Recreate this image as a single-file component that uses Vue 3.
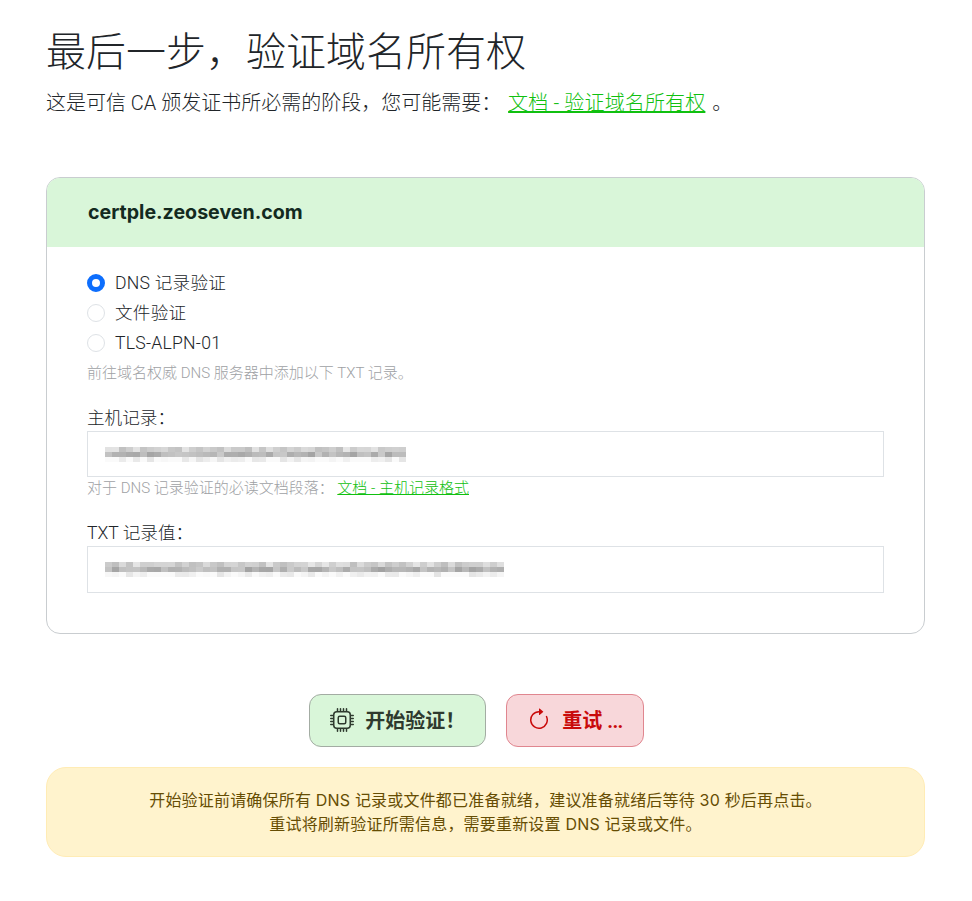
<template>
  <div class="page">
    <h1 class="title">最后一步，验证域名所有权</h1>
    <p class="lead">这是可信 CA 颁发证书所必需的阶段，您可能需要： <a class="link" href="#">文档 - 验证域名所有权</a> 。</p>

    <div class="card">
      <div class="card-header">certple.zeoseven.com</div>
      <div class="card-body">
        <label v-for="(m, i) in methods" :key="m" class="radio">
          <span class="dot" :class="{ on: i === 0 }"></span>
          {{ m }}
        </label>
        <div class="hint top">前往域名权威 DNS 服务器中添加以下 TXT 记录。</div>

        <div class="label">主机记录：</div>
        <div class="input">
          <div class="mosaic">
            <i v-for="(c, i) in hostCells" :key="i" :style="{ background: c }"></i>
          </div>
        </div>
        <div class="hint under">对于 DNS 记录验证的必读文档段落： <a class="link" href="#">文档 - 主机记录格式</a></div>

        <div class="label">TXT 记录值：</div>
        <div class="input tall">
          <div class="mosaic wide">
            <i v-for="(c, i) in txtCells" :key="i" :style="{ background: c }"></i>
          </div>
        </div>
      </div>
    </div>

    <div class="actions">
      <button class="btn start">
        <svg width="24" height="24" viewBox="0 0 16 16" fill="currentColor"><path d="M5 0a.5.5 0 0 1 .5.5V2h1V.5a.5.5 0 0 1 1 0V2h1V.5a.5.5 0 0 1 1 0V2h1V.5a.5.5 0 0 1 1 0V2A2.5 2.5 0 0 1 14 4.5h1.5a.5.5 0 0 1 0 1H14v1h1.5a.5.5 0 0 1 0 1H14v1h1.5a.5.5 0 0 1 0 1H14v1h1.5a.5.5 0 0 1 0 1H14a2.5 2.5 0 0 1-2.5 2.5v1.5a.5.5 0 0 1-1 0V14h-1v1.5a.5.5 0 0 1-1 0V14h-1v1.5a.5.5 0 0 1-1 0V14h-1v1.5a.5.5 0 0 1-1 0V14A2.5 2.5 0 0 1 2 11.5H.5a.5.5 0 0 1 0-1H2v-1H.5a.5.5 0 0 1 0-1H2v-1H.5a.5.5 0 0 1 0-1H2v-1H.5a.5.5 0 0 1 0-1H2A2.5 2.5 0 0 1 4.5 2V.5A.5.5 0 0 1 5 0m-.5 3A1.5 1.5 0 0 0 3 4.5v7A1.5 1.5 0 0 0 4.5 13h7a1.5 1.5 0 0 0 1.5-1.5v-7A1.5 1.5 0 0 0 11.5 3zM5 6.5A1.5 1.5 0 0 1 6.5 5h3A1.5 1.5 0 0 1 11 6.5v3A1.5 1.5 0 0 1 9.5 11h-3A1.5 1.5 0 0 1 5 9.5zM6.5 6a.5.5 0 0 0-.5.5v3a.5.5 0 0 0 .5.5h3a.5.5 0 0 0 .5-.5v-3a.5.5 0 0 0-.5-.5z"/></svg>
        <span>开始验证！</span>
      </button>
      <button class="btn retry">
        <svg width="24" height="24" viewBox="0 0 16 16" fill="currentColor"><path fill-rule="evenodd" d="M8 3a5 5 0 1 0 4.546 2.914.5.5 0 0 1 .908-.417A6 6 0 1 1 8 2z"/><path d="M8 4.466V.534a.25.25 0 0 1 .41-.192l2.36 1.966c.12.1.12.284 0 .384L8.41 4.658A.25.25 0 0 1 8 4.466"/></svg>
        <span>重试 <span class="dots">...</span></span>
      </button>
    </div>

    <div class="alert">
      开始验证前请确保所有 DNS 记录或文件都已准备就绪，建议准备就绪后等待 30 秒后再点击。<br>
      重试将刷新验证所需信息，需要重新设置 DNS 记录或文件。
    </div>
  </div>
</template>

<script setup>
const methods = ['DNS 记录验证', '文件验证', 'TLS-ALPN-01']

// blurred-out values in the screenshot, drawn as a mosaic of grey cells
const mosaic = (cols, seed) => {
  let s = seed
  const cells = []
  for (let r = 0; r < 3; r++) {
    for (let c = 0; c < cols; c++) {
      s = (s * 9301 + 49297) % 233280
      const base = r === 1 ? 172 : r === 0 ? 200 : 238
      const v = Math.min(250, base + Math.round((s / 233280) * 40) - 10)
      cells.push(`rgb(${v},${v},${v})`)
    }
  }
  return cells
}

const hostCells = mosaic(43, 17)
const txtCells = mosaic(57, 53)
</script>

<style>
body {
  background: #fff;
}
</style>

<style scoped>
.page {
  box-sizing: border-box;
  width: 972px;
  height: 901px;
  padding: 29px 47px 0 46px;
  font-family: Roboto, "Noto Sans CJK SC", sans-serif;
  font-size: 17.6px;
  line-height: 1.5;
  color: #212529;
  overflow: hidden;
}

.title {
  margin: 0;
  font-size: 40px;
  font-weight: 200;
  line-height: 48px;
}

.lead {
  margin: 11px 0 0;
  font-size: 20px;
  font-weight: 300;
  line-height: 30px;
}

.link {
  color: #10c010;
  text-decoration: underline;
}

.lead .link {
  margin: 0 2px 0 2px;
  letter-spacing: 0.15px;
}

.card {
  margin-top: 59px;
  border: 1px solid #c9cdd0;
  border-radius: 14px;
  overflow: hidden;
}

.card-header {
  height: 69px;
  padding-left: 41px;
  background: #d9f6d9;
  color: #132a1f;
  font-family: Inter, "Noto Sans CJK SC", sans-serif;
  font-size: 19.6px;
  font-weight: 700;
  line-height: 69px;
}

.card-body {
  padding: 21px 40px 40px;
}

.radio {
  display: flex;
  align-items: center;
  gap: 10px;
  height: 30px;
  font-weight: 300;
  letter-spacing: 0.25px;
}

.dot {
  box-sizing: border-box;
  width: 18px;
  height: 18px;
  border: 1px solid #dee2e6;
  border-radius: 50%;
  background: #fff;
}

.dot.on {
  border: 5px solid #0d6efd;
}

.hint {
  font-size: 15px;
  font-weight: 300;
  line-height: 20px;
  color: #9ea1a4;
}

.hint.top {
  margin-top: 5px;
}

.hint.under {
  margin-top: 1px;
}

.label {
  margin: 23px 0 1px;
  line-height: 24px;
  font-weight: 300;
}

.input {
  display: flex;
  align-items: center;
  box-sizing: border-box;
  height: 46px;
  padding-left: 17px;
  border: 1px solid #dee2e6;
}

.input.tall {
  height: 47px;
}

.mosaic {
  display: grid;
  grid-template-columns: repeat(43, 7px);
  grid-auto-rows: 5px;
  filter: blur(0.6px);
}

.mosaic.wide {
  grid-template-columns: repeat(57, 7px);
}

.actions {
  display: flex;
  justify-content: center;
  gap: 20px;
  margin-top: 60px;
  padding-right: 18px;
}

.btn {
  display: flex;
  align-items: center;
  gap: 11px;
  box-sizing: border-box;
  height: 53px;
  padding: 0 20px 2px;
  border-radius: 12px;
  font-family: inherit;
  font-size: 20px;
  font-weight: 700;
}

.start {
  background: #d9f6d9;
  border: 1px solid #a3aca3;
  color: #2e3a2e;
}

.retry {
  background: #f8d7da;
  border: 1px solid #e0868f;
  color: #c90a0a;
}

.dots {
  letter-spacing: -0.6px;
}

.alert {
  box-sizing: border-box;
  height: 90px;
  margin-top: 20px;
  padding-top: 20px;
  background: #fff3cd;
  border: 1px solid #ffecb5;
  border-radius: 20px;
  color: #664d03;
  font-family: Inter, "Noto Sans CJK SC", sans-serif;
  font-size: 16px;
  font-weight: 400;
  line-height: 24px;
  letter-spacing: 0.19px;
  text-align: center;
}
</style>
